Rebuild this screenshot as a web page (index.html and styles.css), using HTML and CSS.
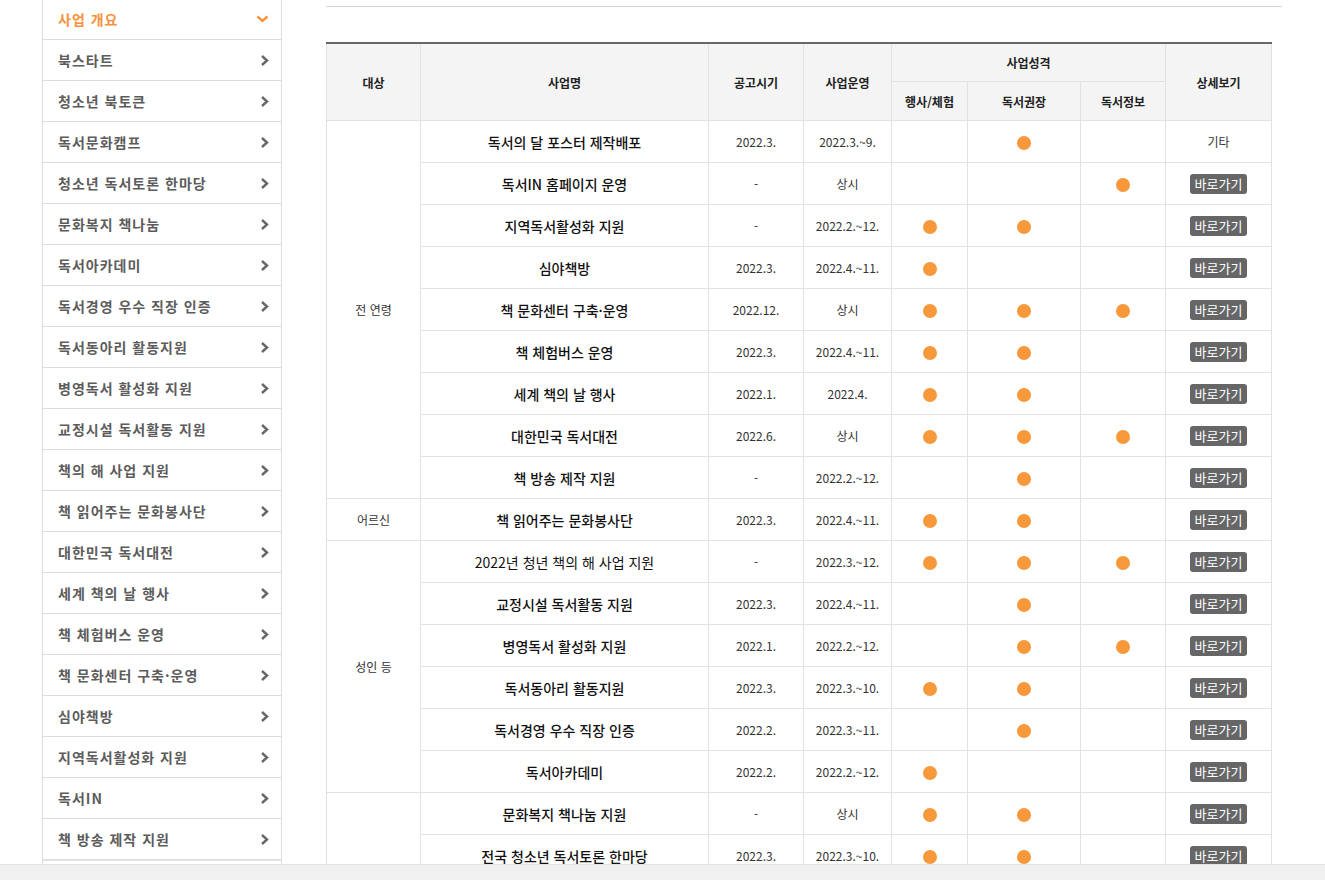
FILE: index.html
```html
<!DOCTYPE html>
<html lang="ko">
<head>
  <meta charset="UTF-8">
  <title>사업 개요</title>
  <link rel="stylesheet" href="styles.css">
</head>
<body>

<div class="page">
  <!-- 좌측 메뉴 -->
  <aside class="lnb">
    <ul class="lnb-list">
      <li class="lnb-item is-open"><a href="#">사업 개요<svg class="arrow" width="13" height="8" viewBox="0 0 13 8"><path d="M1.5 1.5 L6.5 6 L11.5 1.5" fill="none" stroke="#f7923a" stroke-width="2.4"/></svg></a></li>
      <li class="lnb-item"><a href="#">북스타트<svg class="arrow" width="9" height="11" viewBox="0 0 9 11"><path d="M2 1 L7 5.5 L2 10" fill="none" stroke="#666" stroke-width="2.4"/></svg></a></li>
      <li class="lnb-item"><a href="#">청소년 북토큰<svg class="arrow" width="9" height="11" viewBox="0 0 9 11"><path d="M2 1 L7 5.5 L2 10" fill="none" stroke="#666" stroke-width="2.4"/></svg></a></li>
      <li class="lnb-item"><a href="#">독서문화캠프<svg class="arrow" width="9" height="11" viewBox="0 0 9 11"><path d="M2 1 L7 5.5 L2 10" fill="none" stroke="#666" stroke-width="2.4"/></svg></a></li>
      <li class="lnb-item"><a href="#">청소년 독서토론 한마당<svg class="arrow" width="9" height="11" viewBox="0 0 9 11"><path d="M2 1 L7 5.5 L2 10" fill="none" stroke="#666" stroke-width="2.4"/></svg></a></li>
      <li class="lnb-item"><a href="#">문화복지 책나눔<svg class="arrow" width="9" height="11" viewBox="0 0 9 11"><path d="M2 1 L7 5.5 L2 10" fill="none" stroke="#666" stroke-width="2.4"/></svg></a></li>
      <li class="lnb-item"><a href="#">독서아카데미<svg class="arrow" width="9" height="11" viewBox="0 0 9 11"><path d="M2 1 L7 5.5 L2 10" fill="none" stroke="#666" stroke-width="2.4"/></svg></a></li>
      <li class="lnb-item"><a href="#">독서경영 우수 직장 인증<svg class="arrow" width="9" height="11" viewBox="0 0 9 11"><path d="M2 1 L7 5.5 L2 10" fill="none" stroke="#666" stroke-width="2.4"/></svg></a></li>
      <li class="lnb-item"><a href="#">독서동아리 활동지원<svg class="arrow" width="9" height="11" viewBox="0 0 9 11"><path d="M2 1 L7 5.5 L2 10" fill="none" stroke="#666" stroke-width="2.4"/></svg></a></li>
      <li class="lnb-item"><a href="#">병영독서 활성화 지원<svg class="arrow" width="9" height="11" viewBox="0 0 9 11"><path d="M2 1 L7 5.5 L2 10" fill="none" stroke="#666" stroke-width="2.4"/></svg></a></li>
      <li class="lnb-item"><a href="#">교정시설 독서활동 지원<svg class="arrow" width="9" height="11" viewBox="0 0 9 11"><path d="M2 1 L7 5.5 L2 10" fill="none" stroke="#666" stroke-width="2.4"/></svg></a></li>
      <li class="lnb-item"><a href="#">책의 해 사업 지원<svg class="arrow" width="9" height="11" viewBox="0 0 9 11"><path d="M2 1 L7 5.5 L2 10" fill="none" stroke="#666" stroke-width="2.4"/></svg></a></li>
      <li class="lnb-item"><a href="#">책 읽어주는 문화봉사단<svg class="arrow" width="9" height="11" viewBox="0 0 9 11"><path d="M2 1 L7 5.5 L2 10" fill="none" stroke="#666" stroke-width="2.4"/></svg></a></li>
      <li class="lnb-item"><a href="#">대한민국 독서대전<svg class="arrow" width="9" height="11" viewBox="0 0 9 11"><path d="M2 1 L7 5.5 L2 10" fill="none" stroke="#666" stroke-width="2.4"/></svg></a></li>
      <li class="lnb-item"><a href="#">세계 책의 날 행사<svg class="arrow" width="9" height="11" viewBox="0 0 9 11"><path d="M2 1 L7 5.5 L2 10" fill="none" stroke="#666" stroke-width="2.4"/></svg></a></li>
      <li class="lnb-item"><a href="#">책 체험버스 운영<svg class="arrow" width="9" height="11" viewBox="0 0 9 11"><path d="M2 1 L7 5.5 L2 10" fill="none" stroke="#666" stroke-width="2.4"/></svg></a></li>
      <li class="lnb-item"><a href="#">책 문화센터 구축·운영<svg class="arrow" width="9" height="11" viewBox="0 0 9 11"><path d="M2 1 L7 5.5 L2 10" fill="none" stroke="#666" stroke-width="2.4"/></svg></a></li>
      <li class="lnb-item"><a href="#">심야책방<svg class="arrow" width="9" height="11" viewBox="0 0 9 11"><path d="M2 1 L7 5.5 L2 10" fill="none" stroke="#666" stroke-width="2.4"/></svg></a></li>
      <li class="lnb-item"><a href="#">지역독서활성화 지원<svg class="arrow" width="9" height="11" viewBox="0 0 9 11"><path d="M2 1 L7 5.5 L2 10" fill="none" stroke="#666" stroke-width="2.4"/></svg></a></li>
      <li class="lnb-item"><a href="#">독서IN<svg class="arrow" width="9" height="11" viewBox="0 0 9 11"><path d="M2 1 L7 5.5 L2 10" fill="none" stroke="#666" stroke-width="2.4"/></svg></a></li>
      <li class="lnb-item"><a href="#">책 방송 제작 지원<svg class="arrow" width="9" height="11" viewBox="0 0 9 11"><path d="M2 1 L7 5.5 L2 10" fill="none" stroke="#666" stroke-width="2.4"/></svg></a></li>
    </ul>
  </aside>

  <!-- 본문 -->
  <main class="content">
    <div class="content-top"></div>

    <table class="biz-table">
      <colgroup>
        <col style="width:94px">
        <col style="width:288px">
        <col style="width:95px">
        <col style="width:88px">
        <col style="width:76px">
        <col style="width:113px">
        <col style="width:85px">
        <col style="width:106px">
      </colgroup>
      <thead>
        <tr class="head-top">
          <th rowspan="2">대상</th>
          <th rowspan="2">사업명</th>
          <th rowspan="2">공고시기</th>
          <th rowspan="2">사업운영</th>
          <th colspan="3">사업성격</th>
          <th rowspan="2">상세보기</th>
        </tr>
        <tr class="head-sub">
          <th>행사/체험</th>
          <th>독서권장</th>
          <th>독서정보</th>
        </tr>
      </thead>
      <tbody>
        <!-- 전 연령 -->
        <tr>
          <td rowspan="9" class="target">전 연령</td>
          <td class="name">독서의 달 포스터 제작배포</td>
          <td>2022.3.</td>
          <td>2022.3.~9.</td>
          <td></td>
          <td><span class="dot"></span></td>
          <td></td>
          <td>기타</td>
        </tr>
        <tr>
          <td class="name">독서IN 홈페이지 운영</td>
          <td>-</td>
          <td>상시</td>
          <td></td>
          <td></td>
          <td><span class="dot"></span></td>
          <td><a href="#" class="btn-go">바로가기</a></td>
        </tr>
        <tr>
          <td class="name">지역독서활성화 지원</td>
          <td>-</td>
          <td>2022.2.~12.</td>
          <td><span class="dot"></span></td>
          <td><span class="dot"></span></td>
          <td></td>
          <td><a href="#" class="btn-go">바로가기</a></td>
        </tr>
        <tr>
          <td class="name">심야책방</td>
          <td>2022.3.</td>
          <td>2022.4.~11.</td>
          <td><span class="dot"></span></td>
          <td></td>
          <td></td>
          <td><a href="#" class="btn-go">바로가기</a></td>
        </tr>
        <tr>
          <td class="name">책 문화센터 구축·운영</td>
          <td>2022.12.</td>
          <td>상시</td>
          <td><span class="dot"></span></td>
          <td><span class="dot"></span></td>
          <td><span class="dot"></span></td>
          <td><a href="#" class="btn-go">바로가기</a></td>
        </tr>
        <tr>
          <td class="name">책 체험버스 운영</td>
          <td>2022.3.</td>
          <td>2022.4.~11.</td>
          <td><span class="dot"></span></td>
          <td><span class="dot"></span></td>
          <td></td>
          <td><a href="#" class="btn-go">바로가기</a></td>
        </tr>
        <tr>
          <td class="name">세계 책의 날 행사</td>
          <td>2022.1.</td>
          <td>2022.4.</td>
          <td><span class="dot"></span></td>
          <td><span class="dot"></span></td>
          <td></td>
          <td><a href="#" class="btn-go">바로가기</a></td>
        </tr>
        <tr>
          <td class="name">대한민국 독서대전</td>
          <td>2022.6.</td>
          <td>상시</td>
          <td><span class="dot"></span></td>
          <td><span class="dot"></span></td>
          <td><span class="dot"></span></td>
          <td><a href="#" class="btn-go">바로가기</a></td>
        </tr>
        <tr>
          <td class="name">책 방송 제작 지원</td>
          <td>-</td>
          <td>2022.2.~12.</td>
          <td></td>
          <td><span class="dot"></span></td>
          <td></td>
          <td><a href="#" class="btn-go">바로가기</a></td>
        </tr>

        <!-- 어르신 -->
        <tr>
          <td class="target">어르신</td>
          <td class="name">책 읽어주는 문화봉사단</td>
          <td>2022.3.</td>
          <td>2022.4.~11.</td>
          <td><span class="dot"></span></td>
          <td><span class="dot"></span></td>
          <td></td>
          <td><a href="#" class="btn-go">바로가기</a></td>
        </tr>

        <!-- 성인 등 -->
        <tr>
          <td rowspan="6" class="target">성인 등</td>
          <td class="name name-light">2022년 청년 책의 해 사업 지원</td>
          <td>-</td>
          <td>2022.3.~12.</td>
          <td><span class="dot"></span></td>
          <td><span class="dot"></span></td>
          <td><span class="dot"></span></td>
          <td><a href="#" class="btn-go">바로가기</a></td>
        </tr>
        <tr>
          <td class="name">교정시설 독서활동 지원</td>
          <td>2022.3.</td>
          <td>2022.4.~11.</td>
          <td></td>
          <td><span class="dot"></span></td>
          <td></td>
          <td><a href="#" class="btn-go">바로가기</a></td>
        </tr>
        <tr>
          <td class="name">병영독서 활성화 지원</td>
          <td>2022.1.</td>
          <td>2022.2.~12.</td>
          <td></td>
          <td><span class="dot"></span></td>
          <td><span class="dot"></span></td>
          <td><a href="#" class="btn-go">바로가기</a></td>
        </tr>
        <tr>
          <td class="name">독서동아리 활동지원</td>
          <td>2022.3.</td>
          <td>2022.3.~10.</td>
          <td><span class="dot"></span></td>
          <td><span class="dot"></span></td>
          <td></td>
          <td><a href="#" class="btn-go">바로가기</a></td>
        </tr>
        <tr>
          <td class="name">독서경영 우수 직장 인증</td>
          <td>2022.2.</td>
          <td>2022.3.~11.</td>
          <td></td>
          <td><span class="dot"></span></td>
          <td></td>
          <td><a href="#" class="btn-go">바로가기</a></td>
        </tr>
        <tr>
          <td class="name">독서아카데미</td>
          <td>2022.2.</td>
          <td>2022.2.~12.</td>
          <td><span class="dot"></span></td>
          <td></td>
          <td></td>
          <td><a href="#" class="btn-go">바로가기</a></td>
        </tr>

        <!-- 다음 그룹 (화면 아래로 이어짐) -->
        <tr>
          <td rowspan="2" class="target"></td>
          <td class="name">문화복지 책나눔 지원</td>
          <td>-</td>
          <td>상시</td>
          <td><span class="dot"></span></td>
          <td><span class="dot"></span></td>
          <td></td>
          <td><a href="#" class="btn-go">바로가기</a></td>
        </tr>
        <tr>
          <td class="name">전국 청소년 독서토론 한마당</td>
          <td>2022.3.</td>
          <td>2022.3.~10.</td>
          <td><span class="dot"></span></td>
          <td><span class="dot"></span></td>
          <td></td>
          <td><a href="#" class="btn-go">바로가기</a></td>
        </tr>
      </tbody>
    </table>
  </main>
</div>

<div class="scroll-bar"></div>

</body>
</html>
```

FILE: styles.css
```css
/* 기본 */
html {
  overflow: hidden;
}
body {
  margin: 0;
  background: #fff;
  color: #333;
  font-family: "Noto Sans CJK KR", "Noto Sans", sans-serif;
  font-size: 12px;
}
a {
  text-decoration: none;
}

.page {
  display: flex;
  align-items: flex-start;
  gap: 44px;
  padding-left: 42px;
}

/* 좌측 메뉴 */
.lnb {
  width: 238px;
  flex: none;
  margin-top: -1px;
  padding-bottom: 20px;
  border-left: 1px solid #ddd;
  border-right: 1px solid #ddd;
}
.lnb-list {
  list-style: none;
  margin: 0;
  padding: 0;
}
.lnb-item {
  border-bottom: 1px solid #ddd;
}
.lnb-item:last-child {
  box-shadow: 0 1px 0 #e4e4e4;
}
.lnb-item a {
  display: flex;
  align-items: center;
  justify-content: space-between;
  height: 40px;
  padding: 0 12px 0 15px;
  color: #5c5c5c;
  font-size: 14px;
  font-weight: 700;
  letter-spacing: 1px;
  line-height: 40px;
}
.lnb-item.is-open a {
  color: #f7923a;
}
.lnb-item .arrow {
  display: block;
}

/* 본문 */
.content {
  width: 956px;
  flex: none;
}
.content-top {
  margin-top: 6px;
  height: 0;
  border-top: 1px solid #d4d4d4;
}

.biz-table {
  width: 946px;
  margin-top: 35px;
  table-layout: fixed;
  border-collapse: collapse;
  border-top: 2px solid #666;
  text-align: center;
}
.biz-table th,
.biz-table td {
  border: 1px solid #e2e2e2;
  padding: 0;
  vertical-align: middle;
}
.biz-table th {
  background: #f4f4f4;
  color: #222;
  font-size: 12px;
  font-weight: 700;
}
.head-top th {
  height: 37px;
}
.head-sub th {
  height: 38px;
}
.biz-table td {
  height: 41px;
  color: #333;
  font-size: 12px;
  line-height: 16px;
}
.biz-table td.name {
  color: #111;
  font-size: 14px;
  font-weight: 500;
}
.biz-table td.name-light {
  font-weight: 400;
}

.dot {
  display: inline-block;
  width: 14px;
  height: 14px;
  border-radius: 50%;
  background: #f7993b;
  vertical-align: middle;
}

.btn-go {
  display: inline-block;
  width: 57px;
  height: 20px;
  border-radius: 3px;
  background: #666;
  color: #fff;
  font-size: 13px;
  line-height: 20px;
  vertical-align: middle;
}

/* 하단 가로 스크롤 영역 */
.scroll-bar {
  position: fixed;
  left: 0;
  right: 0;
  bottom: 0;
  height: 15px;
  background: #f0f0f0;
  border-top: 1px solid #e2e2e2;
}
```
